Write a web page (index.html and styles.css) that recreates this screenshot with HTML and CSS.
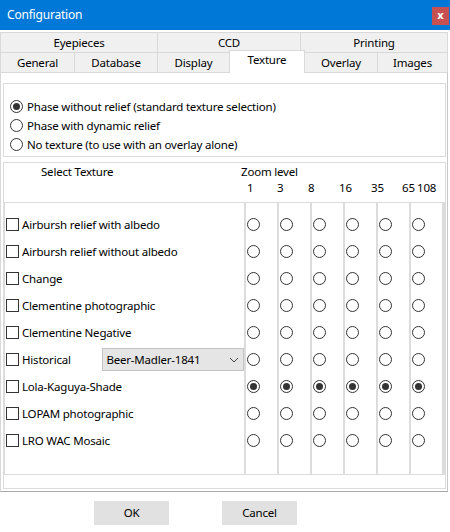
FILE: index.html
```html
<!DOCTYPE html>
<html>
<head>
<meta charset="utf-8">
<link rel="stylesheet" href="styles.css">
</head>
<body>
<div class="window">
  <div class="titlebar">
    <span class="title">Configuration</span>
    <span class="close">x</span>
  </div>
  <div class="tabs">
    <div class="tabrow row1">
      <div class="tab">Eyepieces</div>
      <div class="tab">CCD</div>
      <div class="tab last">Printing</div>
    </div>
    <div class="tabrow row2">
      <div class="tab">General</div>
      <div class="tab">Database</div>
      <div class="tab">Display</div>
      <div class="tab active">Texture</div>
      <div class="tab">Overlay</div>
      <div class="tab last">Images</div>
    </div>
  </div>
  <div class="page">
    <div class="group1">
      <div class="opt"><span class="radio checked"></span><span>Phase without relief (standard texture selection)</span></div>
      <div class="opt"><span class="radio"></span><span>Phase with dynamic relief</span></div>
      <div class="opt"><span class="radio"></span><span>No texture (to use with an overlay alone)</span></div>
    </div>
    <div class="group2">
      <div class="head">
        <div class="head-left">Select Texture</div>
        <div class="head-right">
          <div class="zl">Zoom level</div>
          <div class="nums"><span>1</span><span>3</span><span>8</span><span>16</span><span>35</span><span>65</span><span>108</span></div>
        </div>
      </div>
      <div class="inner">
        <div class="names">
          <div class="nrow"><span class="check"></span><span>Airbursh relief with albedo</span></div>
          <div class="nrow"><span class="check"></span><span>Airbursh relief without albedo</span></div>
          <div class="nrow"><span class="check"></span><span>Change</span></div>
          <div class="nrow"><span class="check"></span><span>Clementine photographic</span></div>
          <div class="nrow"><span class="check"></span><span>Clementine Negative</span></div>
          <div class="nrow"><span class="check"></span><span>Historical</span>
            <div class="combo"><span>Beer-Madler-1841</span>
              <svg class="chev" width="10" height="6" viewBox="0 0 10 6"><polyline points="1,1 5,5 9,1" fill="none" stroke="#444" stroke-width="1"/></svg>
            </div>
          </div>
          <div class="nrow"><span class="check"></span><span>Lola-Kaguya-Shade</span></div>
          <div class="nrow"><span class="check"></span><span>LOPAM photographic</span></div>
          <div class="nrow"><span class="check"></span><span>LRO WAC Mosaic</span></div>
        </div>
        <div class="zcol"><span class="radio"></span><span class="radio"></span><span class="radio"></span><span class="radio"></span><span class="radio"></span><span class="radio"></span><span class="radio checked"></span><span class="radio"></span><span class="radio"></span></div>
        <div class="zcol"><span class="radio"></span><span class="radio"></span><span class="radio"></span><span class="radio"></span><span class="radio"></span><span class="radio"></span><span class="radio checked"></span><span class="radio"></span><span class="radio"></span></div>
        <div class="zcol"><span class="radio"></span><span class="radio"></span><span class="radio"></span><span class="radio"></span><span class="radio"></span><span class="radio"></span><span class="radio checked"></span><span class="radio"></span><span class="radio"></span></div>
        <div class="zcol"><span class="radio"></span><span class="radio"></span><span class="radio"></span><span class="radio"></span><span class="radio"></span><span class="radio"></span><span class="radio checked"></span><span class="radio"></span><span class="radio"></span></div>
        <div class="zcol"><span class="radio"></span><span class="radio"></span><span class="radio"></span><span class="radio"></span><span class="radio"></span><span class="radio"></span><span class="radio checked"></span><span class="radio"></span><span class="radio"></span></div>
        <div class="zcol lastcol"><span class="radio"></span><span class="radio"></span><span class="radio"></span><span class="radio"></span><span class="radio"></span><span class="radio"></span><span class="radio checked"></span><span class="radio"></span><span class="radio"></span></div>
      </div>
    </div>
  </div>
  <div class="buttons">
    <div class="btn">OK</div>
    <div class="btn">Cancel</div>
  </div>
</div>
</body>
</html>
```
FILE: styles.css
```css
* { box-sizing: border-box; }
html, body { margin: 0; padding: 0; }
body {
  width: 450px;
  height: 532px;
  overflow: hidden;
  background: #ffffff;
  font-family: "Noto Sans", "Open Sans", sans-serif;
  font-size: 11.5px;
  letter-spacing: -0.2px;
  color: #000;
}
.window { width: 450px; height: 532px; background: #fff; }
.titlebar {
  height: 30px;
  background: #0078d7;
  color: #fff;
  display: flex;
  justify-content: space-between;
  align-items: flex-start;
}
.title { padding-left: 7px; line-height: 30px; font-size: 12px; }
.close {
  width: 17px;
  height: 18px;
  margin-top: 7px;
  margin-right: 1px;
  background: #c75050;
  color: #fff;
  font-size: 11px;
  font-weight: bold;
  letter-spacing: 0;
  text-align: center;
  line-height: 16px;
}
.tabs { margin-top: 2px; width: 448px; }
.tabrow { display: grid; height: 20px; }
.row1 { grid-template-columns: 157px 143px 148px; }
.row2 { grid-template-columns: 74px 83px 72px 76px 72px 71px; }
.tab {
  background: #f0f0f0;
  border-top: 1px solid #d9d9d9;
  border-left: 1px solid #d9d9d9;
  text-align: center;
  line-height: 20px;
  height: 20px;
}
.tab.last { border-right: 1px solid #d9d9d9; }
.tab.active {
  background: #fff;
  height: 23px;
  margin-top: -2px;
  border-right: 1px solid #d9d9d9;
  line-height: 18px;
  position: relative;
  z-index: 2;
}
.row2 .tab.active + .tab { border-left: none; }
.page {
  width: 448px;
  height: 420px;
  border: 1px solid #d9d9d9;
  border-bottom: 1px solid #a8a8a8;
  border-right: 1px solid #c8c8c8;
  padding: 10px 1px 0 2px;
}
.group1 {
  height: 74px;
  border: 1px solid #dcdcdc;
  padding: 13px 0 0 6px;
}
.opt { display: flex; align-items: center; height: 19px; gap: 4px; }
.radio {
  width: 13px;
  height: 13px;
  border: 1px solid #333;
  border-radius: 50%;
  background: #fff;
  display: flex;
  align-items: center;
  justify-content: center;
  flex: none;
}
.radio.checked::after {
  content: "";
  width: 7px;
  height: 7px;
  border-radius: 50%;
  background: #333;
}
.group2 {
  margin-top: 5px;
  height: 327px;
  border: 1px solid #dcdcdc;
  display: flex;
  flex-direction: column;
}
.head { display: flex; height: 39px; padding-top: 1px; flex: none; }
.head-left { width: 237px; padding-left: 37px; line-height: 16px; }
.head-right { display: flex; flex-direction: column; }
.zl { line-height: 16px; }
.nums {
  display: grid;
  grid-template-columns: 30px 31px 31px 32px 31px 15px auto;
  line-height: 16px;
  padding-left: 6px;
}
.inner {
  height: 273px;
  border: 1px solid #dcdcdc;
  display: flex;
  flex: none;
}
.names {
  width: 240px;
  padding-top: 8px;
  display: flex;
  flex-direction: column;
}
.nrow { height: 27px; display: flex; align-items: center; gap: 3px; padding-left: 1px; }
.check {
  width: 13px;
  height: 13px;
  border: 1px solid #333;
  background: #fff;
  flex: none;
}
.combo {
  margin-left: auto;
  width: 142px;
  height: 23px;
  background: #e5e5e5;
  border: 1px solid #c4c4c4;
  display: flex;
  align-items: center;
  justify-content: space-between;
  padding: 0 4px 0 3px;
}
.zcol {
  width: 33px;
  border-left: 2px solid #dcdcdc;
  padding: 8px 0 0 1px;
  display: flex;
  flex-direction: column;
}
.zcol .radio { margin: 7px 0; }
.zcol.lastcol { border-right: 2px solid #dcdcdc; width: 35px; }
.buttons {
  display: flex;
  gap: 53px;
  padding-left: 94px;
  margin-top: 9px;
}
.btn {
  width: 75px;
  height: 24px;
  background: #e1e1e1;
  text-align: center;
  line-height: 23px;
}
```
